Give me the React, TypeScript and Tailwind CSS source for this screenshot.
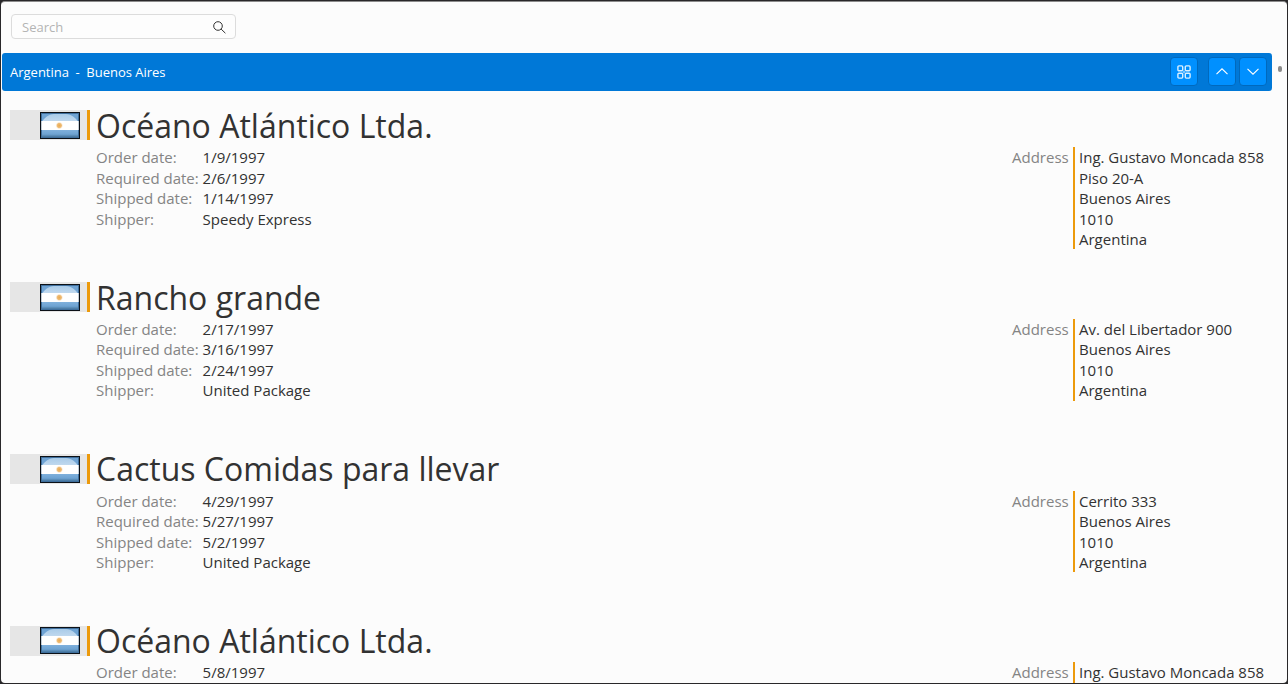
import React from "react";

type Order = {
  customer: string;
  orderDate: string;
  requiredDate: string;
  shippedDate: string;
  shipper: string;
  address: string[];
};

const orders: Order[] = [
  {
    customer: "Océano Atlántico Ltda.",
    orderDate: "1/9/1997",
    requiredDate: "2/6/1997",
    shippedDate: "1/14/1997",
    shipper: "Speedy Express",
    address: ["Ing. Gustavo Moncada 858", "Piso 20-A", "Buenos Aires", "1010", "Argentina"],
  },
  {
    customer: "Rancho grande",
    orderDate: "2/17/1997",
    requiredDate: "3/16/1997",
    shippedDate: "2/24/1997",
    shipper: "United Package",
    address: ["Av. del Libertador 900", "Buenos Aires", "1010", "Argentina"],
  },
  {
    customer: "Cactus Comidas para llevar",
    orderDate: "4/29/1997",
    requiredDate: "5/27/1997",
    shippedDate: "5/2/1997",
    shipper: "United Package",
    address: ["Cerrito 333", "Buenos Aires", "1010", "Argentina"],
  },
  {
    customer: "Océano Atlántico Ltda.",
    orderDate: "5/8/1997",
    requiredDate: "",
    shippedDate: "",
    shipper: "",
    address: ["Ing. Gustavo Moncada 858"],
  },
];

function Flag() {
  return (
    <svg width="40" height="27" viewBox="0 0 40 27" className="block">
      <defs>
        <linearGradient id="sky" x1="0" y1="0" x2="0" y2="1">
          <stop offset="0" stopColor="#a9cbe8" />
          <stop offset="1" stopColor="#c3daef" />
        </linearGradient>
        <linearGradient id="sea" x1="0" y1="0" x2="0" y2="1">
          <stop offset="0" stopColor="#7fb0dc" />
          <stop offset="0.6" stopColor="#6ea3d2" />
          <stop offset="1" stopColor="#47779f" />
        </linearGradient>
        <radialGradient id="sun">
          <stop offset="0" stopColor="#e9a94f" />
          <stop offset="0.55" stopColor="#efbd78" />
          <stop offset="1" stopColor="#fff" stopOpacity="0" />
        </radialGradient>
      </defs>
      <rect width="40" height="27" fill="#0c1117" />
      <rect x="1" y="1" width="38" height="25" fill="#3f6f9d" />
      <rect x="2" y="2" width="36" height="8" fill="#6fa3d3" />
      <path d="M2 10C4 6 9 2 14 2h12c5 0 10 4 12 8z" fill="url(#sky)" />
      <rect x="1" y="9" width="38" height="9" fill="#c5ced6" />
      <rect x="2" y="9" width="36" height="9" fill="#fff" />
      <rect x="2" y="18" width="36" height="7" fill="url(#sea)" />
      <circle cx="19.3" cy="13.5" r="4" fill="url(#sun)" />
    </svg>
  );
}

function OrderItem({ order }: { order: Order }) {
  const fields = [
    ["Order date:", order.orderDate],
    ["Required date:", order.requiredDate],
    ["Shipped date:", order.shippedDate],
    ["Shipper:", order.shipper],
  ].filter(([, value]) => value !== "");
  return (
    <article className="flex h-[171.73px] shrink-0 pl-[9px]">
      <div className="mt-[6.4px] flex h-[30px] w-20 shrink-0 items-start justify-end border-r-[3px] border-[#ec9a0c] bg-[#e6e6e6] pt-[1.8px] pr-[7px]">
        <Flag />
      </div>
      <div className="ml-[6px] flex grow flex-col">
        <h2 className="h-[43.3px] text-[32px] leading-[43.6px] text-[#323232]">{order.customer}</h2>
        <div className="flex justify-between text-[15px] leading-[20.43px] text-[#323232]">
          <dl>
            {fields.map(([label, value]) => (
              <div key={label} className="flex">
                <dt className="w-[106.6px] whitespace-nowrap text-[#848484]">{label}</dt>
                <dd>{value}</dd>
              </div>
            ))}
          </dl>
          <div className="flex w-[260px] items-start">
            <span className="w-[61px] text-[#848484]">Address</span>
            <div className="border-l-2 border-[#ec9a0c] pl-1 whitespace-nowrap">
              {order.address.map((line) => (
                <div key={line}>{line}</div>
              ))}
            </div>
          </div>
        </div>
      </div>
    </article>
  );
}

function HeaderButton({ label, children }: { label: string; children: React.ReactNode }) {
  return (
    <button
      aria-label={label}
      className="flex h-[29px] w-7 items-center justify-center rounded-[4px] border border-[#0069bd] bg-[#0090ff] text-white"
    >
      {children}
    </button>
  );
}

export default function App() {
  return (
    <div className="h-[684px] w-[1288px] bg-[#29282a] p-px font-['Open_Sans',sans-serif]">
      <div className="flex h-[682px] w-[1286px] flex-col overflow-hidden rounded-[4px] border-t border-[#8c8c8c] bg-[#fcfcfc]">
        <div className="flex h-[51px] shrink-0 pt-[12px] pl-[10px]">
          <div className="flex h-[25px] w-[225px] items-center justify-between rounded-[4px] border border-[#dcdcdc] bg-[#fdfdfd] pr-[9px] pl-[10px]">
            <span className="pt-[2px] text-[13px] text-[#b4b4b4]">Search</span>
            <svg className="mt-px" width="13" height="13" viewBox="0 0 13 13" fill="none" stroke="#333" strokeWidth="1">
              <circle cx="5" cy="5" r="4.3" />
              <path d="M8.1 8.1l4.3 4.1" />
            </svg>
          </div>
        </div>
        <div className="flex grow">
          <main className="flex h-[630px] w-[1271px] flex-col overflow-hidden">
            <header className="ml-px flex h-[38px] w-[1270px] shrink-0 items-center justify-between rounded-[3px] bg-[#0078d7] pr-[5px] pl-2">
              <div className="pt-px text-[13px] whitespace-pre text-white [word-spacing:-0.1px]">
                {"Argentina  -  Buenos Aires"}
              </div>
              <div className="flex pb-px">
                <HeaderButton label="Group">
                  <svg width="14" height="14" viewBox="0 0 14 14" fill="none" stroke="#d9efff" strokeWidth="1.4">
                    <rect x="0.9" y="0.9" width="4.8" height="4.8" rx="1" />
                    <rect x="8.3" y="0.9" width="4.8" height="4.8" rx="1" />
                    <rect x="0.9" y="8.3" width="4.8" height="4.8" rx="1" />
                    <rect x="8.3" y="8.3" width="4.8" height="4.8" rx="1" />
                    <path d="M5.7 5.7h2.6v2.6H5.7z" fill="#7cc6ff" stroke="none" />
                  </svg>
                </HeaderButton>
                <div className="ml-[10px] flex gap-[3px]">
                  <HeaderButton label="Previous">
                    <svg width="12" height="7" viewBox="0 0 12 7" fill="none" stroke="#fff" strokeWidth="1.1">
                      <path d="M0.5 6.2L6 0.8l5.5 5.4" />
                    </svg>
                  </HeaderButton>
                  <HeaderButton label="Next">
                    <svg width="12" height="7" viewBox="0 0 12 7" fill="none" stroke="#fff" strokeWidth="1.1">
                      <path d="M0.5 0.8L6 6.2l5.5-5.4" />
                    </svg>
                  </HeaderButton>
                </div>
              </div>
            </header>
            <div className="flex grow flex-col overflow-hidden pt-[13px]">
              {orders.map((order, i) => (
                <OrderItem key={i} order={order} />
              ))}
            </div>
          </main>
          <div className="flex w-[15px] justify-center pt-[13px]">
            <div className="h-[6px] w-[4px] rounded-full bg-[#8a8a8a]" />
          </div>
        </div>
      </div>
    </div>
  );
}
